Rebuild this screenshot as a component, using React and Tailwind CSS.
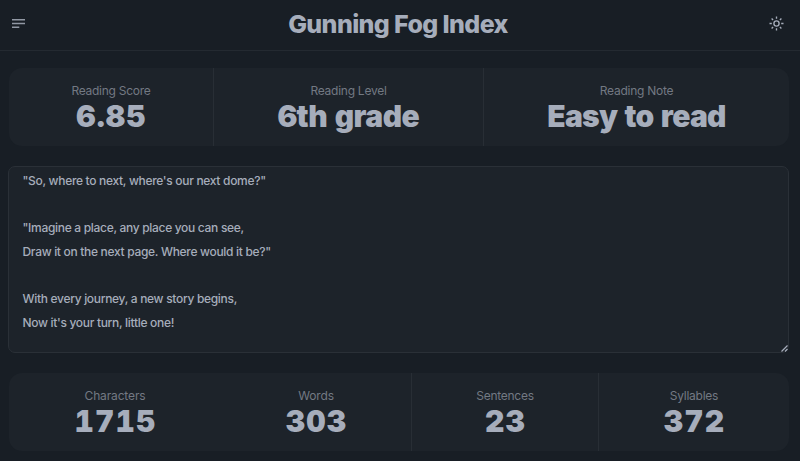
const TEXT = `"So, where to next, where's our next dome?"

"Imagine a place, any place you can see,
Draw it on the next page. Where would it be?"

With every journey, a new story begins,
Now it's your turn, little one!`;

function Stat({ label, value, className, valueClass, labelClass = "tracking-[-0.26px]" }) {
  return (
    <div className={`flex flex-col items-center pt-[15px] ${className}`}>
      <div className={`whitespace-nowrap text-[12px] leading-[15px] text-[#737983] ${labelClass}`}>{label}</div>
      <div className={`mt-px whitespace-nowrap text-[30px] leading-[34px] font-black tabular-nums text-[#a6adbb] ${valueClass}`}>{value}</div>
    </div>
  );
}

export default function App() {
  return (
    <div className="flex h-[461px] w-[800px] flex-col overflow-hidden bg-[#181e25] font-['Inter','Liberation_Sans',sans-serif]">
      <header className="flex h-[51px] shrink-0 items-center justify-between border-b border-[#242a31] pr-[16px] pb-[3px] pl-[12px]">
        <svg width="13" height="9" viewBox="0 0 13 9" className="text-[#9198a4]">
          <path d="M0 0.8h13M0 4.5h13M0 8.2h7.3" stroke="currentColor" strokeWidth="1.6" fill="none" />
        </svg>
        <h1 className="ml-[2px] text-[25px] leading-[30px] font-extrabold tracking-[-0.62px] text-[#a6adbb]">Gunning Fog Index</h1>
        <svg width="15" height="15" viewBox="0 0 15 15" fill="none" stroke="#a6adbb" strokeWidth="1.35">
          <circle cx="7.5" cy="7.5" r="2.6" />
          <path d="M7.5 0.5v2.3M7.5 12.2v2.3M0.5 7.5h2.3M12.2 7.5h2.3M2.6 2.6l1.5 1.5M10.9 10.9l1.5 1.5M2.6 12.4l1.5-1.5M10.9 4.1l1.5-1.5" />
        </svg>
      </header>

      <section className="mt-[17px] ml-[9px] flex h-[78px] w-[780px] shrink-0 rounded-[13px] bg-[#1d232a]">
        <Stat label="Reading Score" value="6.85" className="w-[205px] border-r border-[#282e35]" valueClass="pl-px tracking-[1.1px]" />
        <Stat label="Reading Level" value="6th grade" className="w-[270px] border-r border-[#282e35]" valueClass="tracking-[-0.5px]" />
        <Stat label="Reading Note" value="Easy to read" className="w-[305px]" valueClass="tracking-[-0.75px]" />
      </section>

      <div className="relative mt-[20px] ml-[8px] h-[187px] w-[781px] shrink-0 rounded-[7px] border border-[#2a3037] bg-[#1d232a] pt-[2px] pl-[13.5px]">
        <p className="whitespace-pre text-[12px] leading-[23.65px] font-[450] tracking-[-0.31px] text-[#a6adbb]">{TEXT}</p>
        <svg width="7" height="7" viewBox="0 0 7 7" className="absolute right-0 bottom-0" stroke="#a6adbb" strokeWidth="1.2">
          <path d="M0.5 6.5l6-6M4 6.5l2.5-2.5" />
        </svg>
      </div>

      <section className="mt-[20px] ml-[9px] flex h-[78px] w-[780px] shrink-0 rounded-[13px] bg-[#1d232a]">
        <Stat label="Characters" value="1715" className="w-[212px]" valueClass="pl-px tracking-[1.2px]" labelClass="tracking-[-0.15px]" />
        <Stat label="Words" value="303" className="w-[191px] border-r border-[#282e35]" valueClass="pl-px tracking-[1.2px]" labelClass="tracking-[-0.15px]" />
        <Stat label="Sentences" value="23" className="w-[187px] border-r border-[#282e35]" valueClass="pl-px tracking-[1.2px]" />
        <Stat label="Syllables" value="372" className="w-[190px]" valueClass="pl-px tracking-[1.2px]" />
      </section>
    </div>
  );
}
